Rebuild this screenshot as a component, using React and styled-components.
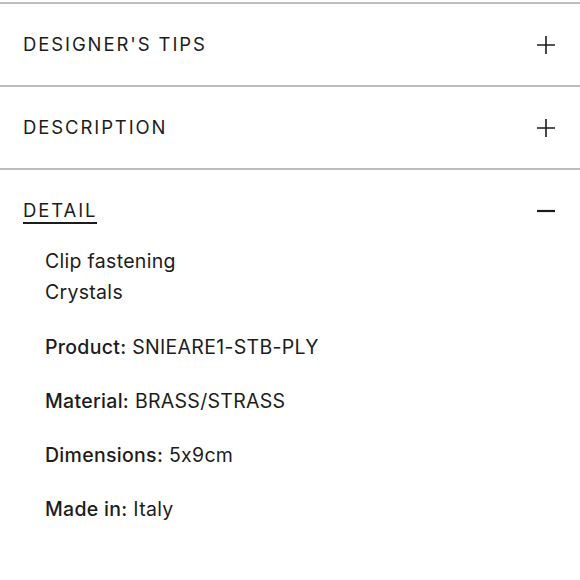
import React from 'react'
import styled, { createGlobalStyle } from 'styled-components'

const GlobalStyle = createGlobalStyle`
  body {
    margin: 0;
    background: #fff;
    font-family: Inter, "Liberation Sans", sans-serif;
    font-feature-settings: "calt" 0;
    color: #1c1c1c;
  }
`

const Page = styled.div`
  padding-top: 2px;
`

const Section = styled.section`
  border-top: 2px solid #bdbdbd;
`

const Header = styled.div`
  display: flex;
  align-items: center;
  justify-content: space-between;
  height: 81px;
  padding: 0 23px 0 23px;
`

const Title = styled.span`
  font-size: 18.5px;
  letter-spacing: 1.9px;
  font-weight: 400;
  line-height: 1;
  padding-bottom: ${props => (props.open ? '3px' : '0')};
  border-bottom: ${props => (props.open ? '2px solid #1c1c1c' : 'none')};
  margin-top: ${props => (props.open ? '4px' : '0')};
`

const Toggle = styled.svg`
  width: 20px;
  height: 20px;
  margin-right: 1px;
`

const Body = styled.div`
  padding: 0 45px;
  margin-top: -5px;
  font-size: 19.5px;
  line-height: 31px;
  letter-spacing: 0.3px;
`

const Lines = styled.p`
  margin: 0 0 24px;
`

const Item = styled.p`
  margin: 0 0 23px;
`

const Label = styled.span`
  font-weight: 500;
`

const Plus = () => (
  <Toggle viewBox="0 0 20 20">
    <path d="M1 10h18M10 1v18" stroke="#1c1c1c" strokeWidth="1.6" fill="none" />
  </Toggle>
)

const Minus = () => (
  <Toggle viewBox="0 0 20 20">
    <path d="M1 10h18" stroke="#1c1c1c" strokeWidth="2.2" fill="none" />
  </Toggle>
)

const details = [
  ['Product:', 'SNIEARE1-STB-PLY'],
  ['Material:', 'BRASS/STRASS'],
  ['Dimensions:', '5x9cm'],
  ['Made in:', 'Italy'],
]

const App = () => {
  return (
    <Page>
      <GlobalStyle />
      <Section>
        <Header>
          <Title>DESIGNER'S TIPS</Title>
          <Plus />
        </Header>
      </Section>
      <Section>
        <Header>
          <Title>DESCRIPTION</Title>
          <Plus />
        </Header>
      </Section>
      <Section>
        <Header>
          <Title open>DETAIL</Title>
          <Minus />
        </Header>
        <Body>
          <Lines>
            Clip fastening
            <br />
            Crystals
          </Lines>
          {details.map(([label, value]) => (
            <Item key={label}>
              <Label>{label}</Label> {value}
            </Item>
          ))}
        </Body>
      </Section>
    </Page>
  )
}

export default App
